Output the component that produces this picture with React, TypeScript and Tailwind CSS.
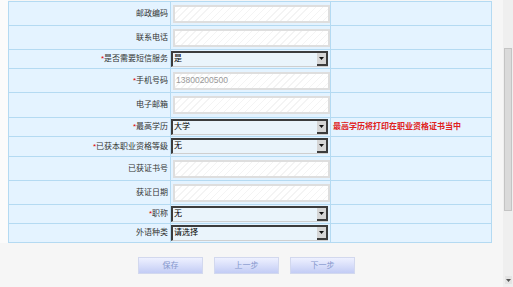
import React from 'react';

type Row = {
  label: string;
  required?: boolean;
  kind: 'text' | 'select';
  value?: string;
  placeholder?: string;
  hint?: string;
  h: string;
};

const rows: Row[] = [
  { label: '邮政编码', kind: 'text', h: 'h-[24px]' },
  { label: '联系电话', kind: 'text', h: 'h-[24px]' },
  { label: '是否需要短信服务', required: true, kind: 'select', value: '是', h: 'h-[19px]' },
  { label: '手机号码', required: true, kind: 'text', placeholder: '13800200500', h: 'h-[24px]' },
  { label: '电子邮箱', kind: 'text', h: 'h-[25px]' },
  { label: '最高学历', required: true, kind: 'select', value: '大学', hint: '最高学历将打印在职业资格证书当中', h: 'h-[19px]' },
  { label: '已获本职业资格等级', required: true, kind: 'select', value: '无', h: 'h-[20px]' },
  { label: '已获证书号', kind: 'text', h: 'h-[24px]' },
  { label: '获证日期', kind: 'text', h: 'h-[24px]' },
  { label: '职称', required: true, kind: 'select', value: '无', h: 'h-[19px]' },
  { label: '外语种类', kind: 'select', value: '请选择', h: 'h-[19px]' },
];

const TextBox = ({ placeholder }: { placeholder?: string }) => (
  <div className="ml-[2px] flex h-[18px] w-[157px] items-center border-2 border-[#dedede] bg-[repeating-linear-gradient(135deg,#ffffff_0px,#ffffff_4px,#f4f4f4_4px,#f4f4f4_5px)] pl-[1px] text-[8.5px] text-[#999]">
    {placeholder}
  </div>
);

const SelectBox = ({ value }: { value?: string }) => (
  <div className="flex h-[16px] w-[157px] border-l-2 border-t-2 border-b border-[#3c3c3c] border-b-[#cfcfcf] bg-[#eaf4fb]">
    <span className="flex-1 pl-[1px] text-[8px] leading-[12px] text-black">{value}</span>
    <span className="flex h-[13px] w-[11px] items-center justify-center border-b-2 border-r-2 border-[#3c3c3c] bg-[#d6d6d6]">
      <svg width="5" height="3" viewBox="0 0 5 3">
        <path d="M0 0h5L2.5 3z" fill="#111" />
      </svg>
    </span>
  </div>
);

const Button = ({ label }: { label: string }) => (
  <button className="h-[17px] w-[65px] border border-[#d2d8ee] bg-[linear-gradient(#eef1ff,#c3ccf5)] text-[8px] leading-[15px] text-[#8497cc]">
    {label}
  </button>
);

export default function App() {
  return (
    <div className="flex h-[287px] w-[513px] overflow-hidden bg-[#f6f6f6] font-['Liberation_Sans','Noto_Sans_CJK_SC',sans-serif]">
      <div className="flex flex-1 flex-col">
        <div className="flex">
          <div className="w-[8px] bg-[#fbfbfb]" />
          <div className="mt-[1px] w-[484px] border-l border-r border-t border-[#b4daf2] bg-[#e4f3ff]">
            {rows.map((r) => (
              <div key={r.label} className={`flex border-b border-[#b4daf2] ${r.h}`}>
                <div className="flex w-[162px] items-center justify-end border-r border-[#b4daf2] pr-[2px] text-[8px] text-[#333]">
                  {r.required && <span className="text-[#e00000]">*</span>}
                  {r.label}
                </div>
                <div className={`flex w-[160px] border-r border-[#b4daf2] ${r.kind === 'select' ? 'items-start pt-[1px]' : 'items-center'}`}>
                  {r.kind === 'text' ? <TextBox placeholder={r.placeholder} /> : <SelectBox value={r.value} />}
                </div>
                <div className="flex flex-1 items-center whitespace-nowrap pl-[2px] text-[8px] font-bold text-[#e02020]">{r.hint}</div>
              </div>
            ))}
          </div>
        </div>
        <div className="ml-[138px] mt-[14px] flex gap-[11px]">
          <Button label="保存" />
          <Button label="上一步" />
          <Button label="下一步" />
        </div>
      </div>
      <div className="flex w-[10px] flex-col bg-[#efefef]">
        <div className="ml-[1px] mt-[48px] h-[163px] w-[8px] border border-[#c4c4c4] bg-[#dadada]" />
        <div className="flex-1" />
        <div className="mb-[3px] ml-[2px] flex h-[8px] w-[7px] items-center justify-center bg-[#e4e4e4]">
          <svg width="5" height="3" viewBox="0 0 5 3">
            <path d="M0 0h5L2.5 3z" fill="#555" />
          </svg>
        </div>
      </div>
    </div>
  );
}
